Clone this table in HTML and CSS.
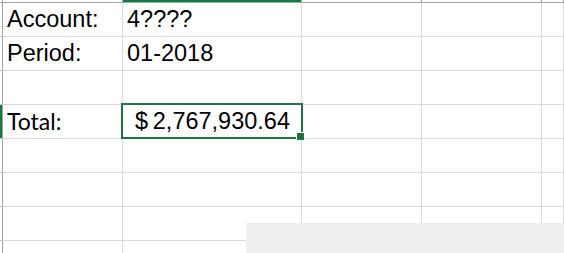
FILE: index.html
```html
<!DOCTYPE html>
<html lang="en">
<head>
    <meta charset="UTF-8">
    <meta name="viewport" content="width=device-width, initial-scale=1.0">
    <title>Account Total</title>
    <link rel="stylesheet" href="styles.css">
</head>
<body>

<!-- Worksheet grid: row header edge + columns A..E -->
<div class="sheet">
    <!-- column header strip -->
    <div class="head corner"></div>
    <div class="head"></div>
    <div class="head active"></div>
    <div class="head"></div>
    <div class="head"></div>
    <div class="head"></div>

    <!-- row 1 -->
    <div class="rowhead"></div>
    <div>Account:</div>
    <div>4????</div>
    <div></div>
    <div></div>
    <div></div>

    <!-- row 2 -->
    <div class="rowhead"></div>
    <div>Period:</div>
    <div>01-2018</div>
    <div></div>
    <div></div>
    <div></div>

    <!-- row 3 -->
    <div class="rowhead"></div>
    <div></div>
    <div></div>
    <div></div>
    <div></div>
    <div></div>

    <!-- row 4 -->
    <div class="rowhead active"></div>
    <div class="label">Total:</div>
    <div class="amount selected">
        <span>$</span><span>2,767,930.64</span>
        <div class="cursor"><div class="handle"></div></div>
    </div>
    <div></div>
    <div></div>
    <div></div>

    <!-- rows 5-7 -->
    <div class="rowhead"></div>
    <div></div>
    <div></div>
    <div></div>
    <div></div>
    <div></div>

    <div class="rowhead"></div>
    <div></div>
    <div></div>
    <div></div>
    <div></div>
    <div></div>

    <div class="rowhead"></div>
    <div></div>
    <div></div>
    <div></div>
    <div></div>
    <div></div>

    <!-- row 8, cut off by the window -->
    <div class="rowhead tail"></div>
    <div class="tail"></div>
    <div class="tail"></div>
    <div class="tail"></div>
    <div class="tail"></div>
    <div class="tail"></div>
</div>

<!-- panel sitting over the bottom of the sheet -->
<div class="panel"></div>

</body>
</html>
```

FILE: styles.css
```css
body {
    margin: 0;
    background-color: #ffffff;
    color: #000000;
    font-family: "Liberation Sans", Arial, sans-serif;
    font-size: 23.5px;
    overflow: hidden;
}

.sheet {
    display: grid;
    grid-template-columns: 3px 120px 179px 120px 120px 1fr;
    grid-template-rows: 3px repeat(7, 34px) 12px;
}

.sheet > div {
    box-sizing: border-box;
    border-right: 1px solid #dadada;
    border-bottom: 1px solid #dadada;
    display: flex;
    align-items: flex-end;
    padding: 0 4px 3px;
    line-height: 27px;
    white-space: nowrap;
}

.sheet > .head {
    padding: 0;
    border-bottom-color: #a3a3a3;
    border-right-color: #a3a3a3;
}

.sheet > .rowhead {
    padding: 0;
    border-right-color: #a3a3a3;
    border-bottom-color: #c8c8c8;
}

.sheet > .tail {
    border-bottom: none;
}

.head.active, .rowhead.active {
    background-color: #217346;
}

.label {
    font-family: Lato, "Liberation Sans", sans-serif;
    font-size: 23px;
}

.sheet > .amount {
    justify-content: space-between;
    padding: 0 11px 3px 12px;
}

.selected {
    position: relative;
}

/* green selection frame + fill handle */
.cursor {
    position: absolute;
    left: -2px;
    top: -2px;
    right: -2px;
    bottom: -1px;
    border: 2px solid #217346;
}

.handle {
    position: absolute;
    right: -4px;
    bottom: -4px;
    width: 7px;
    height: 7px;
    background-color: #217346;
    border: 1px solid #ffffff;
}

.panel {
    position: absolute;
    left: 246px;
    top: 223px;
    width: 318px;
    height: 30px;
    background-color: #efefef;
}
```
